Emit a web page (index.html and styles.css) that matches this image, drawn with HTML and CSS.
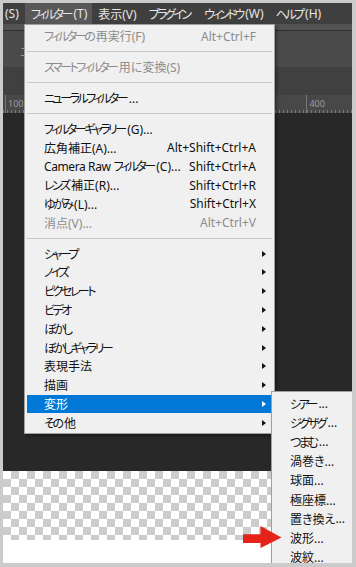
FILE: index.html
```html
<!DOCTYPE html>
<html lang="ja">
<head>
<meta charset="utf-8">
<title>フィルター メニュー</title>
<link rel="stylesheet" href="styles.css">
</head>
<body>
<div class="frame">
  <div class="menubar">
    <span class="mb-item mb-cut">(S)</span>
    <span class="mb-item mb-active"><span class="k">フィルター</span>(T)</span>
    <span class="mb-item">表示(V)</span>
    <span class="mb-item"><span class="k">プラグイン</span></span>
    <span class="mb-item"><span class="k">ウィンドウ</span>(W)</span>
    <span class="mb-item"><span class="k">ヘルプ</span>(H)</span>
  </div>
  <div class="strip"></div>
  <div class="optbar"><span class="opt-char">エ</span></div>
  <div class="tabbar"></div>
  <div class="ruler">
    <span class="ruler-mark">100</span>
    <span class="ruler-mark ruler-mark-right">400</span>
  </div>
  <div class="canvas"></div>
  <div class="checker"></div>
  <div class="paper"></div>

  <div class="menu">
    <div class="item disabled"><span><span class="k">フィルターの</span>再実行(F)</span><span class="sc">Alt+Ctrl+F</span></div>
    <div class="sep"></div>
    <div class="item disabled"><span><span class="k">スマートフィルター</span>用<span class="k">に</span>変換(S)</span></div>
    <div class="sep"></div>
    <div class="item"><span><span class="k">ニューラルフィルター</span>...</span></div>
    <div class="sep"></div>
    <div class="item"><span><span class="k">フィルターギャラリー</span>(G)...</span></div>
    <div class="item"><span>広角補正(A)...</span><span class="sc">Alt+Shift+Ctrl+A</span></div>
    <div class="item"><span><span class="lat">Camera Raw</span> <span class="k">フィルター</span>(C)...</span><span class="sc">Shift+Ctrl+A</span></div>
    <div class="item"><span><span class="k">レンズ</span>補正(R)...</span><span class="sc">Shift+Ctrl+R</span></div>
    <div class="item"><span><span class="k">ゆがみ</span>(L)...</span><span class="sc">Shift+Ctrl+X</span></div>
    <div class="item disabled"><span>消点(V)...</span><span class="sc">Alt+Ctrl+V</span></div>
    <div class="sep"></div>
    <div class="item sub"><span class="k">シャープ</span><span class="sc"></span><i class="tri"></i></div>
    <div class="item sub"><span class="k">ノイズ</span><span class="sc"></span><i class="tri"></i></div>
    <div class="item sub"><span class="k">ピクセレート</span><span class="sc"></span><i class="tri"></i></div>
    <div class="item sub"><span class="k">ビデオ</span><span class="sc"></span><i class="tri"></i></div>
    <div class="item sub"><span class="k">ぼかし</span><span class="sc"></span><i class="tri"></i></div>
    <div class="item sub"><span class="k">ぼかしギャラリー</span><span class="sc"></span><i class="tri"></i></div>
    <div class="item sub"><span>表現手法</span><span class="sc"></span><i class="tri"></i></div>
    <div class="item sub"><span>描画</span><span class="sc"></span><i class="tri"></i></div>
    <div class="item sub hl"><span>変形</span><span class="sc"></span><i class="tri"></i></div>
    <div class="item sub"><span><span class="k">その</span>他</span><span class="sc"></span><i class="tri"></i></div>
  </div>

  <div class="submenu">
    <div class="sitem"><span class="k">シアー</span>...</div>
    <div class="sitem"><span class="k">ジグザグ</span>...</div>
    <div class="sitem"><span class="k">つまむ</span>...</div>
    <div class="sitem">渦巻<span class="k">き</span>...</div>
    <div class="sitem">球面...</div>
    <div class="sitem">極座標...</div>
    <div class="sitem">置<span class="k">き</span>換<span class="k">え</span>...</div>
    <div class="sitem">波形...</div>
    <div class="sitem">波紋...</div>
  </div>

  <svg class="arrow" width="40" height="23" viewBox="0 0 40 23">
    <polygon points="0,8.3 17.5,8.3 17.5,0 38.5,11.6 17.5,22 17.5,17 0,17" fill="#e5231b"/>
  </svg>
</div>
</body>
</html>
```

FILE: styles.css
```css
* { box-sizing: border-box; }
html, body { margin: 0; padding: 0; }
body {
  width: 356px;
  height: 567px;
  overflow: hidden;
  background: #cbcbcb;
  font-family: "Noto Sans", "Noto Sans CJK JP", sans-serif;
  font-size: 12px;
  font-feature-settings: "palt" 1;
}
.k { letter-spacing: -2.5px; margin-right: 2.5px; }
.lat { letter-spacing: -0.4px; }
.frame {
  position: relative;
  width: 356px;
  height: 567px;
  border-style: solid;
  border-color: #cbcbcb;
  border-width: 3px 4px 4px 3px;
  overflow: hidden;
  display: flex;
  flex-direction: column;
}
.menubar {
  height: 21px;
  flex: none;
  background: #3f3f3f;
  display: flex;
  align-items: stretch;
  color: #e6e6e6;
  white-space: nowrap;
}
.mb-item {
  display: flex;
  align-items: center;
  padding: 0 6px;
}
.mb-cut { padding: 0 6px 0 2px; }
.mb-active { background: #585858; padding: 0 5px 0 6px; }
.strip {
  height: 7px;
  flex: none;
  background: #535353;
  border-bottom: 1px solid #2e2e2e;
}
.optbar {
  height: 36px;
  flex: none;
  background: #4b4b4b;
  padding: 12px 0 0 17px;
}
.opt-char { color: #9a9a9a; font-size: 12px; }
.tabbar {
  height: 28px;
  flex: none;
  background: #404040;
}
.ruler {
  position: relative;
  height: 18px;
  flex: none;
  background: #484848;
  background-image: repeating-linear-gradient(90deg, #7a7a7a 0 1px, transparent 1px 4px);
  background-size: 100% 3px;
  background-position: 0 100%;
  background-repeat: no-repeat;
  display: flex;
  align-items: flex-start;
}
.ruler-mark {
  margin-left: 2px;
  padding: 3px 0 0 2px;
  border-left: 1px solid #777;
  height: 18px;
  font-size: 9px;
  line-height: 11px;
  color: #9c9c9c;
}
.ruler-mark-right { margin-left: 283px; }
.canvas {
  flex: 1;
  background: #282828;
}
.checker {
  height: 69px;
  flex: none;
  background-color: #ffffff;
  background-image:
    linear-gradient(45deg, #cccccc 25%, transparent 25%, transparent 75%, #cccccc 75%),
    linear-gradient(45deg, #cccccc 25%, transparent 25%, transparent 75%, #cccccc 75%);
  background-size: 16px 16px;
  background-position: 0 0, 8px 8px;
}
.paper {
  height: 23px;
  flex: none;
  background: #ffffff;
}

.menu {
  position: absolute;
  left: 21px;
  top: 21px;
  width: 251px;
  background: #f0f0f0;
  border: 1px solid #a0a0a0;
  box-shadow: 2px 2px 3px rgba(0, 0, 0, 0.35);
  padding: 2px 2px 1px 2px;
  color: #111;
}
.item {
  height: 18.8px;
  display: grid;
  grid-template-columns: 1fr auto 10px;
  align-items: center;
  padding: 0 6px 0 17px;
  white-space: nowrap;
}
.item .sc { text-align: right; }
.disabled { color: #8c8c8c; }
.sep {
  height: 12px;
  display: flex;
  align-items: center;
}
.sep::before {
  content: "";
  display: block;
  width: 100%;
  height: 1px;
  background: #c9c9c9;
}
.tri {
  justify-self: end;
  width: 0;
  height: 0;
  border-left: 4px solid #111;
  border-top: 3.5px solid transparent;
  border-bottom: 3.5px solid transparent;
}
.hl { background: #0078d7; color: #ffffff; }
.hl .tri { border-left-color: #ffffff; }

.submenu {
  position: absolute;
  left: 268px;
  top: 388px;
  width: 100px;
  background: #f0f0f0;
  border: 1px solid #a0a0a0;
  box-shadow: 2px 2px 3px rgba(0, 0, 0, 0.35);
  padding: 2px;
  color: #111;
}
.sitem {
  height: 19.2px;
  display: flex;
  align-items: center;
  padding-left: 16px;
  white-space: nowrap;
}
.arrow {
  position: absolute;
  left: 240px;
  top: 523px;
}
```
